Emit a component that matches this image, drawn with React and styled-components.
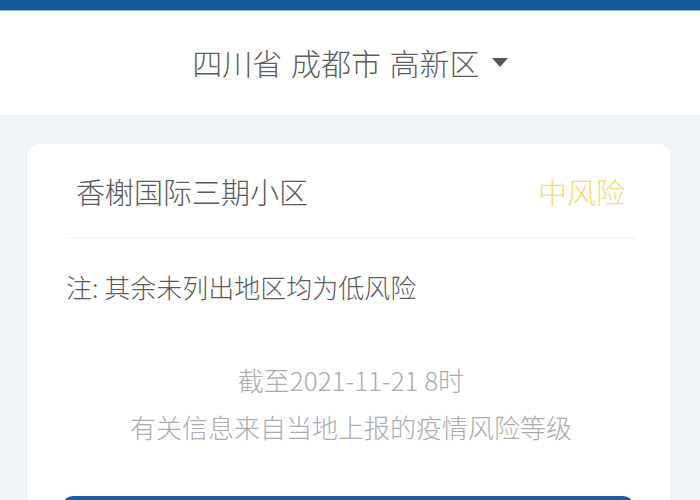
import React from "react";
import styled, { createGlobalStyle } from "styled-components";

const Global = createGlobalStyle`
  html, body {
    margin: 0;
    padding: 0;
    background: #f1f4f7;
    font-family: "Noto Sans CJK SC", "Noto Sans", sans-serif;
    font-weight: 300;
    overflow: hidden;
  }
  * { box-sizing: border-box; }
`;

const Page = styled.div`
  width: 700px;
  height: 500px;
  overflow: hidden;
  background: #f1f4f7;
  display: flex;
  flex-direction: column;
`;

const TopBar = styled.div`
  flex: none;
  height: 11px;
  background: #1457a2;
  border-bottom: 1px solid #8fb3d9;
`;

const Header = styled.header`
  flex: none;
  height: 104px;
  background: #ffffff;
  display: flex;
  align-items: center;
  justify-content: center;
  gap: 12px;
`;

const Region = styled.span`
  font-size: 30px;
  color: #5c5c5c;
  line-height: 1;
  word-spacing: 2px;
  margin-top: -3px;
`;

const Caret = styled.span`
  width: 0;
  height: 0;
  border-left: 8px solid transparent;
  border-right: 8px solid transparent;
  border-top: 9px solid #555;
  margin-top: -1px;
`;

const Card = styled.section`
  flex: none;
  margin: 29px 30px 0 28px;
  background: #ffffff;
  border-radius: 12px;
  padding: 0 34px 0 38px;
  display: flex;
  flex-direction: column;
`;

const TitleRow = styled.div`
  height: 95px;
  padding: 0 11px 0 10px;
  display: flex;
  align-items: center;
  justify-content: space-between;
  border-bottom: 1px solid #eeeeee;
`;

const Title = styled.span`
  font-size: 29px;
  color: #5a5a5a;
`;

const Risk = styled.span`
  font-size: 29px;
  color: ${(p) => p.$color};
`;

const Note = styled.p`
  margin: 30px 0 0;
  font-size: 26px;
  line-height: 36px;
  color: #5a5a5a;
`;

const Footer = styled.div`
  margin-top: 51px;
  display: flex;
  flex-direction: column;
  align-items: center;
`;

const FooterLine = styled.p`
  margin: 0;
  font-size: 26px;
  line-height: 47px;
  color: #ababab;
`;

const Button = styled.button`
  margin: 46px 0 30px -6px;
  height: 84px;
  border: none;
  border-radius: 14px;
  background: #1a5c9f;
`;

export default function App() {
  return (
    <>
      <Global />
      <Page>
        <TopBar />
        <Header>
          <Region>四川省 成都市 高新区</Region>
          <Caret />
        </Header>
        <Card>
          <TitleRow>
            <Title>香榭国际三期小区</Title>
            <Risk $color="#f6dc72">中风险</Risk>
          </TitleRow>
          <Note>注: 其余未列出地区均为低风险</Note>
          <Footer>
            <FooterLine>截至2021-11-21 8时</FooterLine>
            <FooterLine>有关信息来自当地上报的疫情风险等级</FooterLine>
          </Footer>
          <Button aria-label="返回" />
        </Card>
      </Page>
    </>
  );
}
